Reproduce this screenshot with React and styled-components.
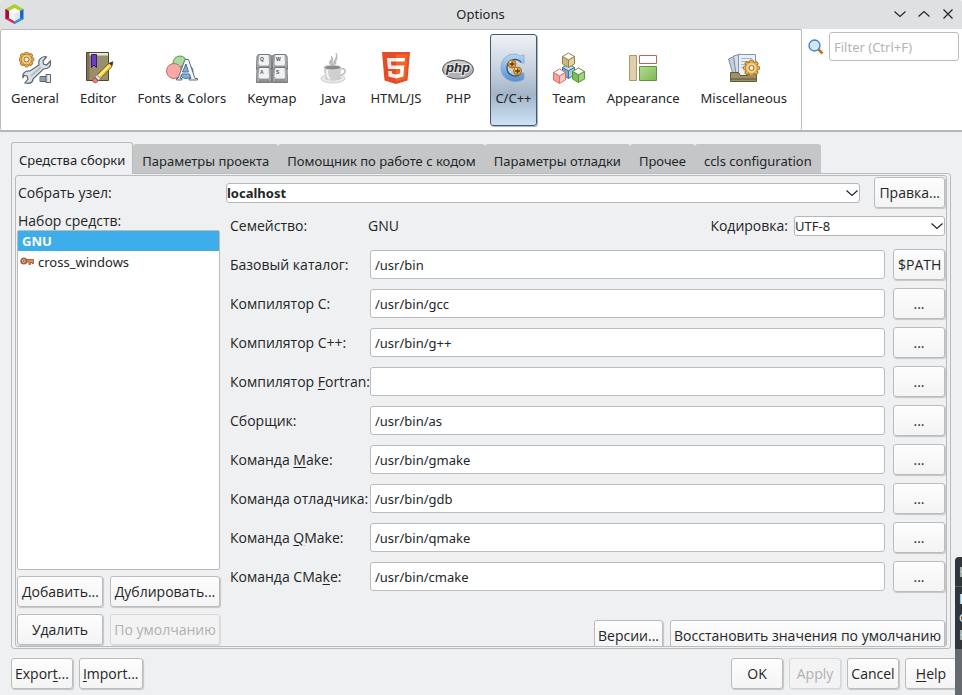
import React from "react";
import styled, { createGlobalStyle, css } from "styled-components";

const GlobalStyle = createGlobalStyle`
  *, *::before, *::after { box-sizing: border-box; }
  body { margin: 0; overflow: hidden; }
  body, button, input, select {
    font-family: "Open Sans", "Noto Sans", sans-serif;
    font-size: 14px;
    line-height: 18px;
    color: #232627;
  }
  u { text-underline-offset: 2px; }
`;

const Window = styled.div`
  position: relative;
  display: flex;
  flex-direction: column;
  height: 100vh;
  overflow: hidden;
  background: #eff0f1;
`;

const TitleBar = styled.header`
  display: grid;
  grid-template-columns: 1fr auto 1fr;
  align-items: center;
  flex: none;
  height: 29px;
  padding: 0 6px 2px 5px;
  background: #dee0e2;
  border-radius: 3px 3px 0 0;
`;

const Title = styled.h1`
  margin: 0;
  font-family: "Noto Sans", sans-serif;
  font-size: 13px;
  font-weight: 400;
`;

const WindowControls = styled.div`
  display: flex;
  justify-content: flex-end;
  gap: 8px;
`;

const WindowButton = styled.button`
  display: flex;
  width: 16px;
  height: 16px;
  padding: 0;
  border: 0;
  background: none;
`;

const Header = styled.div`
  display: flex;
  flex: none;
  height: 103px;
  background: #fff;
  border-bottom: 2px solid #b4b6b8;
`;

const Categories = styled.nav`
  display: flex;
  gap: 11px;
  padding: 4px 9px 4px 5px;
  border: 1px solid #b9bbbd;
  border-bottom: 0;
  border-radius: 2px;
`;

const CategoryButton = styled.button`
  display: flex;
  flex-direction: column;
  align-items: center;
  gap: 5px;
  height: 92px;
  padding: 17px 4px 0;
  border: 1px solid transparent;
  border-radius: 3px;
  background: none;
  font-family: "Noto Sans", sans-serif;
  font-size: 13px;
  white-space: nowrap;
  ${(p) =>
    p.$selected &&
    css`
      border-color: #45576c;
      background: linear-gradient(#eff1f5 0%, #c6d0dc 40%, #a3b5c8 66%, #cde2f7 100%);
      box-shadow: 1px 1px 1px #a9b4bf;
    `}
`;

const Filter = styled.div`
  display: flex;
  flex: 1;
  align-items: center;
  align-self: flex-start;
  gap: 5px;
  padding: 3px 3px 0 6px;
  svg { flex: none; }
`;

const TextField = styled.input`
  flex: 1;
  width: 100%;
  min-width: 0;
  height: 29px;
  padding: 0 4px;
  border: 1px solid #babcbe;
  border-radius: 3px;
  background: #fff;
  font-family: "Noto Sans", sans-serif;
  font-size: 13px;
  outline: none;
  &::placeholder { color: #b3b4b5; opacity: 1; }
`;

const Main = styled.main`
  display: flex;
  flex: 1;
  flex-direction: column;
  min-height: 0;
  padding: 10px 11px 9px 11px;
`;

const TabStrip = styled.div`
  display: flex;
  align-items: flex-end;
  z-index: 1;
`;

const Tab = styled.button`
  height: 29px;
  padding: 5px 9px 0;
  border: 0;
  border-radius: 3px 3px 0 0;
  background: #c4c6c8;
  font-family: "Noto Sans", sans-serif;
  font-size: 13px;
  white-space: nowrap;
  ${(p) =>
    p.$selected &&
    css`
      height: 32px;
      margin-bottom: -1px;
      padding: 3px 7px 0;
      border: 1px solid #b9bbbd;
      border-bottom: 0;
      background: #eff0f1;
    `}
`;

const OuterPane = styled.div`
  display: flex;
  flex: 1;
  min-height: 0;
  padding: 1px 3px;
  border: 1px solid #b9bbbd;
  border-radius: 0 3px 3px 3px;
`;

const Pane = styled.div`
  display: flex;
  flex: 1;
  flex-direction: column;
  min-height: 0;
  overflow: hidden;
  padding: 1px 1px 0;
  border: 1px solid #b9bbbd;
  border-radius: 3px;
`;

const HostRow = styled.div`
  display: flex;
  align-items: center;
  flex: none;
  gap: 14px;
`;

const HostLabel = styled.label`
  width: 195px;
  padding-left: 1px;
`;

const SelectBox = styled.span`
  position: relative;
  display: flex;
  flex: ${(p) => (p.$grow ? "1" : "none")};
  width: ${(p) => (p.$grow ? "auto" : "151px")};
  svg {
    position: absolute;
    top: 2px;
    right: 0;
    pointer-events: none;
  }
`;

const Select = styled.select`
  width: 100%;
  height: 20px;
  padding: 0;
  border: 1px solid #b5b7b9;
  border-radius: 3px;
  background: #fff;
  appearance: none;
  font-family: "Noto Sans", sans-serif;
  font-size: 13px;
  font-weight: ${(p) => (p.$bold ? 700 : 400)};
  line-height: 16px;
`;

const Button = styled.button`
  flex: none;
  height: 31px;
  min-width: 52px;
  padding: 0 ${(p) => (p.$compact ? 3 : 4)}px;
  border: 1px solid #babcbe;
  border-radius: 3px;
  background: linear-gradient(#fdfdfd, #f4f4f5);
  box-shadow: 1px 1px 1px #c3c5c7;
  white-space: nowrap;
  &:disabled {
    border-color: #d6d8d9;
    background: #f3f3f4;
    color: #b0b1b2;
    box-shadow: 1px 1px 0 #dcdedf;
  }
`;

const Columns = styled.div`
  display: flex;
  flex: 1;
  gap: 10px;
  min-height: 0;
`;

const ToolSets = styled.section`
  display: flex;
  flex: none;
  flex-direction: column;
  width: 203px;
  padding: 4px 0 1px;
`;

const SetsTitle = styled.h2`
  margin: 0;
  padding-left: 1px;
  font-size: 14px;
  font-weight: 400;
`;

const SetList = styled.ul`
  flex: 1;
  margin: 0 0 6px;
  padding: 0;
  border: 1px solid #b9bbbd;
  border-radius: 2px;
  background: #fff;
  list-style: none;
`;

const SetItem = styled.li`
  display: flex;
  align-items: center;
  gap: 4px;
  height: 21px;
  padding: 0 2px;
  font-family: "Noto Sans", sans-serif;
  font-size: 13px;
  ${(p) =>
    p.$selected &&
    css`
      height: 20px;
      padding: 0 4px;
      background: #3daee9;
      color: #fcfcfc;
      font-weight: 700;
    `}
`;

const SetButtons = styled.div`
  display: grid;
  grid-template-columns: 86px 1fr;
  gap: 7px;
`;

const Details = styled.section`
  display: flex;
  flex: 1;
  flex-direction: column;
  min-width: 0;
  padding-top: 8px;
`;

const FamilyRow = styled.div`
  display: flex;
  align-items: center;
  flex: none;
  gap: 6px;
  margin-bottom: 13px;
`;

const FamilyName = styled.span`
  width: 132px;
`;

const FamilyValue = styled.output`
  flex: 1;
`;

const Fields = styled.div`
  display: grid;
  grid-template-columns: 132px 1fr 52px;
  align-items: center;
  gap: 8px;
  flex: none;
`;

const FieldLabel = styled.label`
  white-space: nowrap;
`;

const DetailActions = styled.div`
  display: flex;
  flex: none;
  justify-content: flex-end;
  gap: 7px;
  margin-top: 28px;
`;

const Footer = styled.footer`
  display: flex;
  flex: none;
  gap: 6px;
  padding: 0 5px 6px 11px;
`;

const Spacer = styled.span`
  flex: 1;
`;

const Popup = styled.aside`
  position: absolute;
  right: 0;
  bottom: 0;
  width: 7px;
  height: 138px;
  overflow: hidden;
  border-radius: 4px 0 0 0;
  background: linear-gradient(#31363b 0 92px, #656a6f 92px);
  color: #eff0f1;
  white-space: nowrap;
`;

const PopupTitle = styled.div`
  height: 30px;
  margin-bottom: 3px;
  padding: 6px 0 0 4px;
  border-bottom: 1px solid #5a5f64;
`;

const PopupLine = styled.div`
  padding-left: 4px;
  font-weight: ${(p) => (p.$bold ? 700 : 400)};
`;

function Chevron({ up }) {
  return (
    <svg width="16" height="16" viewBox="0 0 16 16" fill="none" stroke="#232627" aria-hidden="true">
      <path d={up ? "M2.500 10.500 8 5.500l5.500 5" : "M2.500 5.500 8 10.500l5.500-5"} strokeWidth="1.200" />
    </svg>
  );
}

const Svg = ({ children, size = 32 }) => (
  <svg width={size} height={size} viewBox={`0 0 ${size} ${size}`} aria-hidden="true">
    {children}
  </svg>
);

const Logo = () => (
  <svg width="19" height="20" viewBox="0 0 19 20" aria-hidden="true">
    <path d="M9.500 0 18.500 5 14.500 8 9.500 5 4.500 8 .5 5z" fill="#a9d02f" />
    <path d="M.5 5 4.500 7.500v6.500l5 3V20L.5 15z" fill="#e81f5c" />
    <path d="M.5 5 4.500 7.500V14L.5 15z" fill="#a00d3e" />
    <path d="M18.500 5v10l-9 5v-3l5-3V7.500z" fill="#1b66bf" />
    <path d="m18.500 15-9 5v-3l5-3z" fill="#3593e8" />
    <path d="m9.500 4 5.500 3v7l-5.500 3L4 14V7z" fill="#fff" />
    <path d="m9.500 10 5.500-3v7l-5.500 3z" fill="#dfe8ee" />
    <path d="M9.500 10 4 7v7l5.500 3z" fill="#f1f5f1" />
  </svg>
);

function Gear({ x, y, r, hole }) {
  return (
    <g transform={`translate(${x} ${y})`}>
      {[0, 45, 90, 135, 180, 225, 270, 315].map((a) => (
        <rect key={a} x="-1.800" y={-r} width="3.600" height="4" rx="1" transform={`rotate(${a})`} fill="#f0b95c" stroke="#a66f1c" />
      ))}
      <circle r={r - 2} fill="#f3c36c" stroke="#b67d28" strokeWidth=".7" />
      <circle r={r - 4} fill="none" stroke="#fbdc9a" />
      <circle r={hole} fill="#e9eef5" stroke="#a66f1c" />
    </g>
  );
}

const GeneralIcon = () => (
  <Svg>
    <Gear x={7.500} y={7.500} r={7.300} hole={2.500} />
    <path d="M20 13c-1-4 1-8 6-8.500l1.500.5-3.500 4 .5 3 3 1 4-4c1 5-2 8-7 8L14 27c0 4-4 5-8 4l3-4-1-3-3-.5-1 2c-1-4 2-7 7-6.500z" fill="#dce1e7" stroke="#5c6670" strokeWidth="1.200" />
    <path d="m22 15-10 9" stroke="#b3bbc5" strokeWidth="2" />
    <path d="M21 24.500h6v5h-6z" fill="#bfc8d2" stroke="#566371" />
    <path d="M23 25v4M25 25v4" stroke="#67727e" />
    <path d="M27 22.500h4.500v8H27z" fill="#cdd5dd" stroke="#566371" />
    <path d="M30 23v7" stroke="#fff" />
  </Svg>
);

const EditorIcon = () => (
  <Svg>
    <path d="M4.500.5h22v28h-22z" fill="#98906c" stroke="#4f482d" />
    <path d="M5 1h21v2.500H5z" fill="#e9e6d8" />
    <path d="M5 1h2.500v27H5z" fill="#7c744f" />
    <path d="M9.500 2.500h5v13L12 13l-2.500 2.500z" fill="#6c3fc0" stroke="#3b1783" />
    <path d="m14 24 12-12 5-2-1.500 5L17 28z" fill="#f3c83b" stroke="#886516" />
    <path d="m15.500 25.500 12-12" stroke="#fff0a0" strokeWidth="1.500" />
    <path d="m27 11 4-1.500-1 4.500z" fill="#333" />
    <path d="m13 25 3.500 3.500 2-2-3.500-4z" fill="#d6dadd" stroke="#777" strokeWidth=".6" />
    <path d="M12.500 25.500 16 29c-2 3-6 1.500-5-1z" fill="#f37a8b" stroke="#ab3149" strokeWidth=".8" />
  </Svg>
);

const FontsIcon = () => (
  <Svg>
    <circle cx="14" cy="11" r="7" fill="#a9dc9c" stroke="#4f9a4e" />
    <circle cx="20" cy="19.500" r="7" fill="#76b4e8" stroke="#3777b0" />
    <circle cx="8" cy="19" r="7.500" fill="#f8aaa5" stroke="#cd6562" />
    <path d="M19 7.500h3.500l6.500 19h2.500V28H23v-1.500h2L23.500 22H16l-2 4.500h2V28h-5.500v-1.500H12zM20 12l-3.500 8h6z" fill="#f4f6fa" stroke="#606b7d" fillRule="evenodd" />
  </Svg>
);

const KeymapIcon = () => (
  <Svg>
    <path d="M1 3h30v27H1z" fill="#a5a7a9" />
    {[["Q", 0, 2], ["W", 16, 2], ["A", 0, 15], ["S", 16, 15]].map(([k, x, y]) => (
      <g key={k} transform={`translate(${x} ${y})`}>
        <path d="M2.500.5h11l1.500 2 .5 13H.5l.5-13z" fill="#a9acaf" stroke="#777a7d" />
        <path d="M3.500 1h9l.5 9-1 1.500H4L2.500 10z" fill="#f0f1f2" />
        <path d="m1 15 3-3h8.500L15 15z" fill="#8f9295" />
        <text x="4" y="7" fontSize="5" fontWeight="700" fontFamily="Liberation Sans, sans-serif" fill="#555">{k}</text>
      </g>
    ))}
  </Svg>
);

const JavaIcon = () => (
  <Svg>
    <ellipse cx="16" cy="26.500" rx="12" ry="4.500" fill="#e8e8e8" stroke="#cfcfcf" />
    <ellipse cx="16" cy="26" rx="8" ry="2.500" fill="#c4c4c4" />
    <path d="M23 17c7-2 7 6-1 6" fill="none" stroke="#c4c4c4" strokeWidth="1.800" />
    <path d="M7 16c0 7 2 11 5 12h7c3-1 5-5 5-12z" fill="#cfcfcf" />
    <path d="M10 18c0 5 1 8 3 9" fill="none" stroke="#f2f2f2" strokeWidth="2" />
    <ellipse cx="15.500" cy="15.500" rx="8.500" ry="2.500" fill="#8a8a8a" stroke="#ddd" />
    <path d="M14 13c-5-4 3-5 0-9 4 3 0 5 2 9M17 13c-2-5 4-6 2-12 3 5-1 7 0 11" fill="#bdbdbd" stroke="#aaa" strokeWidth=".6" />
  </Svg>
);

const HtmlIcon = () => (
  <Svg>
    <path d="M2 0h28l-2.500 28.500L16 32 4.500 28.500z" fill="#e44d26" />
    <path d="M16 2.500h11.500l-2 24.500L16 29.500z" fill="#f16529" />
    <path d="M7 6h9v3.500h-5l.3 4H16V17H8zM8.200 19h3.600l.2 2.500 4 1v4l-7.500-2z" fill="#ebebeb" />
    <path d="M16 6h9l-.4 3.500H16zM16 13.500h8.300l-1 11L16 26.500v-4l4-1 .4-4.500H16z" fill="#fff" />
  </Svg>
);

const PhpIcon = () => (
  <Svg>
    <ellipse cx="16" cy="17.500" rx="15.500" ry="9.500" fill="#b1b2b3" stroke="#55585a" />
    <path d="M2 17a14 8 0 0 1 28 0" fill="#c9cacb" />
    <text x="16" y="20" textAnchor="middle" fontFamily="Liberation Sans, sans-serif" fontSize="13" fontStyle="italic" fontWeight="700" fill="#292c2f" stroke="#e5e5e5" strokeWidth="2" paintOrder="stroke">php</text>
  </Svg>
);

const CppIcon = () => (
  <Svg>
    <defs>
      <linearGradient id="blueRing" x1="0" y1="0" x2="0" y2="1">
        <stop stopColor="#b8d5f2" />
        <stop offset="1" stopColor="#568fd0" />
      </linearGradient>
    </defs>
    <path d="M27 3v8h-3C20 6 10 8 10 16c0 8 9 11 14 5h3v6C18 33 4 28 4 16 4 4 16-1 23 4z" fill="url(#blueRing)" stroke="#79a4d4" strokeWidth=".7" />
    <path d="M24 10C19 5 10 8 10 16c0 7 9 11 14 5" fill="none" stroke="#34516f" strokeWidth="1.200" />
    {[[15, 12], [20.500, 19]].map(([x, y]) => (
      <g key={x} transform={`translate(${x} ${y})`}>
        <circle r="4" fill="#e6a83f" stroke="#a86b19" />
        <path d="M-2.500 0h5M0-2.500v5" stroke="#5d3b11" strokeWidth="1.400" />
        <circle cx="-1.500" cy="-2" r="1" fill="#ffe39f" />
      </g>
    ))}
  </Svg>
);

function Cube({ x, y, top, left, right, line }) {
  return (
    <g transform={`translate(${x} ${y})`} stroke={line} strokeLinejoin="round">
      <path d="m6.500 0 6 3.500-6 3.500-6-3.500z" fill={top} />
      <path d="m.5 3.500 6 3.500v7.500L.5 11z" fill={left} />
      <path d="m12.500 3.500-6 3.500v7.500l6-3.500z" fill={right} />
    </g>
  );
}

const TeamIcon = () => (
  <Svg>
    <Cube x={9} y={12} top="#c8dff1" left="#78a9cc" right="#a8cce5" line="#487596" />
    <Cube x={9} y={1} top="#fff" left="#cbb781" right="#e2d3a7" line="#9b8348" />
    <Cube x={0} y={17} top="#fff" left="#f3a19b" right="#f9c5c0" line="#e06e69" />
    <Cube x={19} y={16} top="#fff" left="#7dbd5c" right="#a2d385" line="#559637" />
  </Svg>
);

const AppearanceIcon = () => (
  <Svg>
    <defs>
      <linearGradient id="greenTile" x1="0" y1="0" x2="1" y2="1">
        <stop stopColor="#b6dc91" />
        <stop offset="1" stopColor="#7eb753" />
      </linearGradient>
    </defs>
    <path d="M2.500 3.500h7v25h-7z" fill="#ded0ac" stroke="#b29655" />
    <path d="M12.500 3.500h17v8h-17z" fill="#fff" stroke="#cb5e56" />
    <path d="M12.500 14.500h17v14h-17z" fill="url(#greenTile)" stroke="#5e9440" />
  </Svg>
);

const MiscIcon = () => (
  <Svg>
    <path d="m.5 7 6-3 5 18-6 2z" fill="#c1cfdb" stroke="#7b8e9f" />
    <path d="m5.500 4 7-2 2 20H8z" fill="#d5dfe9" stroke="#7b8e9f" />
    <path d="M10.500 2.500h17v21h-17z" fill="#e8eff7" stroke="#8496a9" />
    <path d="M13 6.500h11M13 9.500h9M13 12.500h6M13 15.500h4" stroke="#a9b8c8" />
    <path d="M2.500 20.500h8l2 3h7l2-3h7v9h-26z" fill="#9c9168" stroke="#62592f" />
    <path d="M3 27h25" stroke="#7a704b" strokeWidth="2" />
    <Gear x={23.500} y={16} r={8} hole={2.500} />
  </Svg>
);

const SearchIcon = () => (
  <Svg size={16}>
    <path d="m10.500 10.500 4 4" stroke="#b8770b" strokeWidth="2.500" />
    <circle cx="6.500" cy="6.500" r="5.500" fill="#cfe6fb" stroke="#3d7dc2" strokeWidth="1.300" />
  </Svg>
);

const KeyIcon = () => (
  <svg width="14" height="10" viewBox="0 0 14 10" aria-hidden="true">
    <path d="M6 2.500h7.500v4H12V5.500h-1.500v2H9V5H6z" fill="#dd8b62" stroke="#8f4f31" strokeWidth=".8" />
    <circle cx="3.800" cy="4" r="2.600" fill="#f1ded3" stroke="#a55e3c" strokeWidth="1.800" />
    <circle cx="3.800" cy="4" r="1" fill="#a55e3c" />
  </svg>
);

const categories = [
  ["General", GeneralIcon],
  ["Editor", EditorIcon],
  ["Fonts & Colors", FontsIcon],
  ["Keymap", KeymapIcon],
  ["Java", JavaIcon],
  ["HTML/JS", HtmlIcon],
  ["PHP", PhpIcon],
  ["C/C++", CppIcon],
  ["Team", TeamIcon],
  ["Appearance", AppearanceIcon],
  ["Miscellaneous", MiscIcon],
];

const tabs = [
  "Средства сборки",
  "Параметры проекта",
  "Помощник по работе с кодом",
  "Параметры отладки",
  "Прочее",
  "ccls configuration",
];

const fields = [
  ["base", "Базовый каталог:", "/usr/bin", "$PATH"],
  ["c", "Компилятор C:", "/usr/bin/gcc", "..."],
  ["cpp", "Компилятор C++:", "/usr/bin/g++", "..."],
  ["fortran", <>Компилятор <u>F</u>ortran:</>, "", "..."],
  ["as", "Сборщик:", "/usr/bin/as", "..."],
  ["make", <>Команда <u>M</u>ake:</>, "/usr/bin/gmake", "..."],
  ["gdb", "Команда отладчика:", "/usr/bin/gdb", "..."],
  ["qmake", <>Команда <u>Q</u>Make:</>, "/usr/bin/qmake", "..."],
  ["cmake", <>Команда CMa<u>k</u>e:</>, "/usr/bin/cmake", "..."],
];

export default function App() {
  return (
    <>
      <GlobalStyle />
      <Window>
        <TitleBar>
          <Logo />
          <Title>Options</Title>
          <WindowControls>
            <WindowButton aria-label="Minimize"><Chevron /></WindowButton>
            <WindowButton aria-label="Maximize"><Chevron up /></WindowButton>
            <WindowButton aria-label="Close">
              <Svg size={16}>
                <path d="m3.500 3.500 9 9m0-9-9 9" stroke="#232627" strokeWidth="1.200" />
              </Svg>
            </WindowButton>
          </WindowControls>
        </TitleBar>

        <Header>
          <Categories>
            {categories.map(([name, Icon]) => (
              <CategoryButton key={name} $selected={name === "C/C++"}>
                <Icon />
                {name}
              </CategoryButton>
            ))}
          </Categories>
          <Filter>
            <SearchIcon />
            <TextField aria-label="Filter" placeholder="Filter (Ctrl+F)" />
          </Filter>
        </Header>

        <Main>
          <TabStrip role="tablist">
            {tabs.map((t, i) => (
              <Tab key={t} role="tab" aria-selected={i === 0} $selected={i === 0}>{t}</Tab>
            ))}
          </TabStrip>
          <OuterPane>
            <Pane role="tabpanel">
              <HostRow>
                <HostLabel htmlFor="host">Собрать узел:</HostLabel>
                <SelectBox $grow>
                  <Select id="host" $bold><option>localhost</option></Select>
                  <Chevron />
                </SelectBox>
                <Button>Правка...</Button>
              </HostRow>
              <Columns>
                <ToolSets>
                  <SetsTitle>Набор средств:</SetsTitle>
                  <SetList>
                    <SetItem $selected>GNU</SetItem>
                    <SetItem><KeyIcon />cross_windows</SetItem>
                  </SetList>
                  <SetButtons>
                    <Button>Добавить...</Button>
                    <Button $compact>Дублировать...</Button>
                    <Button>Удалить</Button>
                    <Button $compact disabled>По умолчанию</Button>
                  </SetButtons>
                </ToolSets>
                <Details>
                  <FamilyRow>
                    <FamilyName>Семейство:</FamilyName>
                    <FamilyValue>GNU</FamilyValue>
                    <label htmlFor="encoding">Кодировка:</label>
                    <SelectBox>
                      <Select id="encoding"><option>UTF-8</option></Select>
                      <Chevron />
                    </SelectBox>
                  </FamilyRow>
                  <Fields>
                    {fields.map(([id, label, value, action]) => (
                      <React.Fragment key={id}>
                        <FieldLabel htmlFor={id}>{label}</FieldLabel>
                        <TextField id={id} defaultValue={value} />
                        <Button>{action}</Button>
                      </React.Fragment>
                    ))}
                  </Fields>
                  <DetailActions>
                    <Button $compact>Версии...</Button>
                    <Button $compact>Восстановить значения по умолчанию</Button>
                  </DetailActions>
                </Details>
              </Columns>
            </Pane>
          </OuterPane>
        </Main>

        <Footer>
          <Button $compact>Expor<u>t</u>...</Button>
          <Button $compact><u>I</u>mport...</Button>
          <Spacer />
          <Button $compact>OK</Button>
          <Button $compact disabled>Apply</Button>
          <Button $compact>Cancel</Button>
          <Button $compact><u>H</u>elp</Button>
        </Footer>

        <Popup>
          <PopupTitle>К</PopupTitle>
          <PopupLine $bold>П</PopupLine>
          <PopupLine>с</PopupLine>
          <PopupLine>К</PopupLine>
        </Popup>
      </Window>
    </>
  );
}
